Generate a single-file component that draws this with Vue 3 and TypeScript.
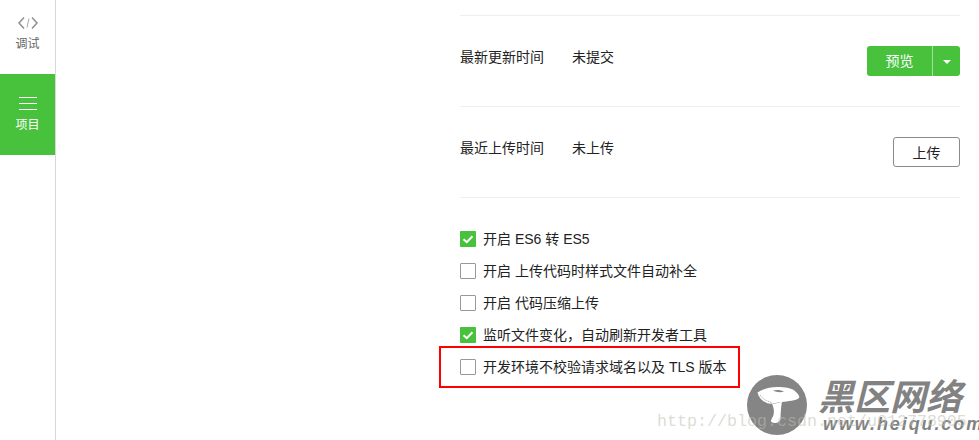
<script setup lang="ts">
const options = [
  { label: '开启 ES6 转 ES5', checked: true },
  { label: '开启 上传代码时样式文件自动补全', checked: false },
  { label: '开启 代码压缩上传', checked: false },
  { label: '监听文件变化，自动刷新开发者工具', checked: true },
  { label: '开发环境不校验请求域名以及 TLS 版本', checked: false, marked: true },
]
</script>

<template>
  <div class="page">
    <aside class="sidebar">
      <div class="nav-item debug">
        <svg width="20" height="12" viewBox="0 0 20 12" fill="none">
          <path d="M6 .5 1 6 6 11.5" stroke="#8f8f8f" stroke-width="1.5" />
          <path d="M14 .5 19 6 14 11.5" stroke="#8f8f8f" stroke-width="1.5" />
          <path d="M11 1.5 9 10.5" stroke="#a8a8a8" stroke-width="1" />
        </svg>
        <span>调试</span>
      </div>
      <div class="nav-item project">
        <div class="burger"><i></i><i></i><i></i></div>
        <span>项目</span>
      </div>
    </aside>

    <main class="content">
      <section class="row">
        <span class="row-label">最新更新时间</span>
        <span class="row-value">未提交</span>
        <div class="split-btn">
          <span class="split-main">预览</span>
          <span class="split-arrow"></span>
        </div>
      </section>
      <section class="row">
        <span class="row-label">最近上传时间</span>
        <span class="row-value">未上传</span>
        <button class="plain-btn">上传</button>
      </section>
      <section class="options">
        <div v-for="opt in options" :key="opt.label" class="option">
          <span class="box" :class="{ checked: opt.checked }">
            <svg v-if="opt.checked" width="16" height="16" viewBox="0 0 16 16" fill="none">
              <path d="M3.5 8.2 6.8 11.2 12.5 5.2" stroke="#fff" stroke-width="2" />
            </svg>
          </span>
          <span class="option-text">{{ opt.label }}</span>
          <span v-if="opt.marked" class="red-mark"></span>
        </div>
      </section>
    </main>

    <div class="watermark">
      <svg class="wm-logo" width="62" height="62" viewBox="0 0 62 62">
        <circle cx="31" cy="31" r="30" fill="#858585" />
        <path d="M11.5 18.5C16 15 24 13 31 13 39 13 47 14 50 18 52 20 54 22 53 24 50 27 42 27 36 28 30 29 26 30 22 29.5 18 28 13 25 11.5 18.5Z" fill="#fff" />
        <path d="M26 29.8C29 30 33 29 36 27.6 35 33 34.5 40 34.5 45 34 49 28 50 25.5 48 24 46.5 26 45 27.5 41 28.5 37 27.5 33 26 29.8Z" fill="#fff" />
        <path d="M27 16.5C31 15.5 35 15.8 38 17.8 34 18.6 30 18.2 27 16.5Z" fill="#858585" />
        <path d="M14 21C17 25 21 27.5 26 28.5" fill="none" stroke="#b5b5b5" stroke-width="1" stroke-dasharray="1.5 1" />
      </svg>
      <div class="wm-brand">
        <div class="wm-title">黑区网络</div>
        <div class="wm-url">www.heiqu.com</div>
      </div>
      <div class="wm-blog">http://blog.csdn.net/u012778905</div>
    </div>
  </div>
</template>

<style scoped>
.page {
  position: relative;
  display: flex;
  width: 979px;
  height: 440px;
  overflow: hidden;
  background: #fff;
  color: #222;
  font-family: "Liberation Sans", "Noto Sans CJK SC", sans-serif;
  font-size: 14px;
}

.sidebar {
  width: 55px;
  flex: none;
  border-right: 1px solid #d8d8d8;
}

.nav-item {
  display: flex;
  flex-direction: column;
  align-items: center;
  font-size: 12px;
  line-height: 16px;
}

.debug {
  height: 74px;
  padding-top: 17px;
  box-sizing: border-box;
  gap: 7px;
  color: #666;
}

.project {
  height: 81px;
  padding-top: 23px;
  box-sizing: border-box;
  gap: 7px;
  background: #48c23d;
  color: #fff;
}

.burger {
  display: flex;
  flex-direction: column;
  gap: 5px;
  width: 18px;
}

.burger i {
  display: block;
  height: 1px;
  background: #fff;
}

.content {
  width: 500px;
  margin-left: 404px;
  padding-top: 15px;
}

.row {
  display: flex;
  align-items: center;
  height: 91px;
  box-sizing: border-box;
  border-top: 1px solid #eee;
}

.row-label {
  width: 112px;
  margin-bottom: 10px;
}

.row-value {
  flex: 1;
  margin-bottom: 10px;
}

.split-btn {
  display: flex;
  width: 93px;
  height: 30px;
  border-radius: 3px;
  background: #48c23d;
  color: #fff;
}

.split-main {
  width: 65px;
  line-height: 30px;
  text-align: center;
  border-right: 1px solid #a6e0a0;
}

.split-arrow {
  width: 0;
  height: 0;
  margin: 14px 0 0 10px;
  border: 4px solid transparent;
  border-top-color: #fff;
  border-bottom: 0;
}

.plain-btn {
  width: 67px;
  height: 30px;
  padding: 0;
  border: 1px solid #8a8a8a;
  border-radius: 3px;
  background: #fff;
  color: #222;
  font: inherit;
}

.options {
  border-top: 1px solid #eee;
  padding-top: 25px;
}

.option {
  position: relative;
  display: flex;
  align-items: center;
  gap: 7px;
  height: 32px;
}

.option-text {
  margin-bottom: 2px;
}

.box {
  width: 16px;
  height: 16px;
  box-sizing: border-box;
  border: 1px solid #999;
  border-radius: 1px;
  overflow: hidden;
}

.box.checked {
  border: 0;
  background: #48c23d;
}

.box svg {
  display: block;
}

.red-mark {
  position: absolute;
  left: -21px;
  top: -5px;
  width: 301px;
  height: 42px;
  box-sizing: border-box;
  border: 2px solid #f00;
}

.watermark {
  position: absolute;
  left: 657px;
  top: 374px;
  width: 322px;
  height: 66px;
}

.wm-logo {
  position: absolute;
  left: 89px;
  top: 0;
}

.wm-brand {
  position: absolute;
  left: 161px;
  top: 3px;
  color: #828282;
  font-style: italic;
  font-weight: 700;
}

.wm-title {
  font-size: 36px;
  line-height: 42px;
  white-space: nowrap;
}

.wm-url {
  margin: -5px 0 0 5px;
  font-size: 18px;
  line-height: 20px;
  letter-spacing: 1.9px;
  white-space: nowrap;
}

.wm-blog {
  position: absolute;
  left: 0;
  top: 38px;
  font-family: "Liberation Mono", monospace;
  font-size: 16.67px;
  line-height: 20px;
  color: rgba(190, 190, 180, 0.55);
  white-space: nowrap;
}
</style>
